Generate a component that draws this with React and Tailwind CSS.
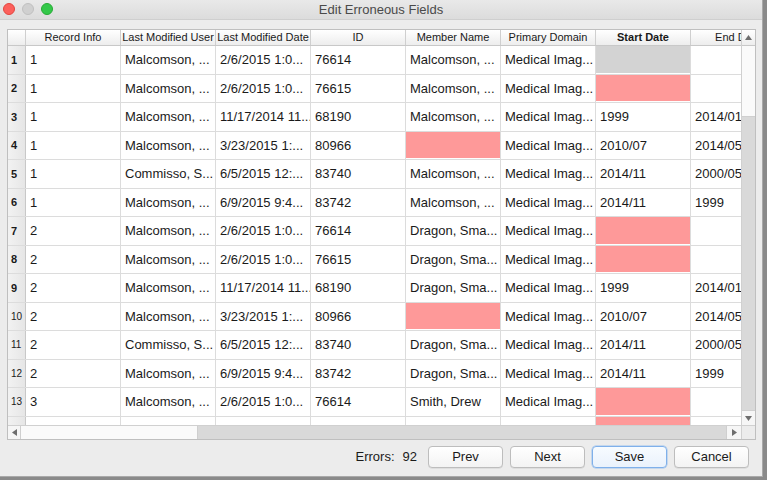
import React from "react";

const COLS = ["Record Info", "Last Modified User", "Last Modified Date", "ID", "Member Name", "Primary Domain", "Start Date", "End Date"];

const P = "pink";
const G = "gray";
const rows = [
  ["1", "Malcomson, ...", "2/6/2015 1:0...", "76614", "Malcomson, ...", "Medical Imag...", G, ""],
  ["1", "Malcomson, ...", "2/6/2015 1:0...", "76615", "Malcomson, ...", "Medical Imag...", P, ""],
  ["1", "Malcomson, ...", "11/17/2014 11...", "68190", "Malcomson, ...", "Medical Imag...", "1999", "2014/01"],
  ["1", "Malcomson, ...", "3/23/2015 1:...", "80966", P, "Medical Imag...", "2010/07", "2014/05"],
  ["1", "Commisso, S...", "6/5/2015 12:...", "83740", "Malcomson, ...", "Medical Imag...", "2014/11", "2000/05"],
  ["1", "Malcomson, ...", "6/9/2015 9:4...", "83742", "Malcomson, ...", "Medical Imag...", "2014/11", "1999"],
  ["2", "Malcomson, ...", "2/6/2015 1:0...", "76614", "Dragon, Sma...", "Medical Imag...", P, ""],
  ["2", "Malcomson, ...", "2/6/2015 1:0...", "76615", "Dragon, Sma...", "Medical Imag...", P, ""],
  ["2", "Malcomson, ...", "11/17/2014 11...", "68190", "Dragon, Sma...", "Medical Imag...", "1999", "2014/01"],
  ["2", "Malcomson, ...", "3/23/2015 1:...", "80966", P, "Medical Imag...", "2010/07", "2014/05"],
  ["2", "Commisso, S...", "6/5/2015 12:...", "83740", "Dragon, Sma...", "Medical Imag...", "2014/11", "2000/05"],
  ["2", "Malcomson, ...", "6/9/2015 9:4...", "83742", "Dragon, Sma...", "Medical Imag...", "2014/11", "1999"],
  ["3", "Malcomson, ...", "2/6/2015 1:0...", "76614", "Smith, Drew", "Medical Imag...", P, ""],
  ["", "", "", "", "", "", P, ""],
];

function Cell({ v }) {
  if (v === P || v === G) {
    return (
      <div className="w-[95px] shrink-0 h-full border-r border-[#dcdcdc] p-0 flex">
        <div className={(v === P ? "bg-[#fe9999]" : "bg-[#d3d3d3]") + " flex-1 mb-px"} />
      </div>
    );
  }
  return (
    <div className="w-[95px] shrink-0 h-full border-r border-[#dcdcdc] pl-[4px] flex items-center overflow-hidden whitespace-nowrap text-[13px] text-[#1a1a1a]">
      {v}
    </div>
  );
}

function Btn({ children, focus }) {
  return (
    <div
      className={
        "w-[75px] h-[22px] rounded-[4px] flex items-center justify-center text-[13px] text-[#1a1a1a] " +
        (focus
          ? "border border-[#7fb0ea] bg-gradient-to-b from-[#f7fbff] to-[#eaf2fc] shadow-[0_0_0_0.5px_#9cc2ee]"
          : "border border-[#bdbdbd] bg-gradient-to-b from-[#ffffff] to-[#f3f3f3] shadow-[0_0.5px_0.5px_rgba(0,0,0,0.12)]")
      }
    >
      {children}
    </div>
  );
}

export default function App() {
  return (
    <div className="w-[767px] h-[480px] bg-[#8a8a8a] overflow-hidden" style={{ fontFamily: '"Liberation Sans", Arial, sans-serif' }}>
      <div className="w-[763px] h-[477px] bg-[#ececec] flex flex-col border-r border-b border-[#a9a9a9]">
        {/* title bar */}
        <div className="h-[20px] shrink-0 relative flex items-center justify-center bg-gradient-to-b from-[#e9e9e9] to-[#dcdcdc] border-b border-[#cfcfcf]">
          <div className="absolute left-[3px] top-[3px] flex gap-[7px]">
            <div className="w-[12px] h-[12px] rounded-full bg-[#fc605c] border border-[#e2463f]" />
            <div className="w-[12px] h-[12px] rounded-full bg-[#d0d0d0] border border-[#c0c0c0]" />
            <div className="w-[12px] h-[12px] rounded-full bg-[#34c84a] border border-[#27aa35]" />
          </div>
          <span className="text-[13px] text-[#4a4a4a]">Edit Erroneous Fields</span>
        </div>

        {/* table */}
        <div className="ml-[7px] mt-[9px] w-[749px] h-[411px] border border-[#bfbfbf] bg-white flex flex-col">
          <div className="flex h-[395px]">
            <div className="w-[733px] h-full overflow-hidden flex flex-col">
              {/* header */}
              <div className="flex h-[16px] shrink-0 bg-gradient-to-b from-[#ffffff] to-[#ededed] border-b border-[#c8c8c8]">
                <div className="w-[18px] shrink-0 border-r border-[#cfcfcf]" />
                {COLS.map((c) => (
                  <div
                    key={c}
                    className={
                      "w-[95px] shrink-0 border-r border-[#cfcfcf] flex justify-center overflow-hidden whitespace-nowrap text-[11px] leading-[15px] text-[#1a1a1a] " +
                      (c === "Start Date" ? "font-bold" : "")
                    }
                  >
                    <span className="shrink-0">{c}</span>
                  </div>
                ))}
              </div>
              {rows.map((r, i) => (
                <div key={i} className="flex h-[28.5px] shrink-0 border-b border-[#dcdcdc]">
                  <div
                    className={
                      "w-[18px] shrink-0 h-full bg-gradient-to-r from-[#f2f2f2] to-[#e6e6e6] border-r border-[#c8c8c8] flex items-center pl-[3px] text-[#1a1a1a] " +
                      (i < 9 ? "text-[11px] font-bold" : "text-[10px]")
                    }
                  >
                    {i < 13 ? i + 1 : ""}
                  </div>
                  {r.map((v, j) => (
                    <Cell key={j} v={v} />
                  ))}
                </div>
              ))}
            </div>
            {/* vertical scrollbar */}
            <div className="w-[14px] h-full flex flex-col border-l border-[#d0d0d0]">
              <div className="h-[16px] shrink-0 bg-gradient-to-b from-[#ffffff] to-[#ededed] border-b border-[#c8c8c8] flex items-center justify-center">
                <svg width="7" height="5" viewBox="0 0 7 5"><path d="M3.5 0L7 5H0z" fill="#6e6e6e" /></svg>
              </div>
              <div className="h-[71px] shrink-0 bg-[#fafafa] border-b border-[#cfcfcf]" />
              <div className="flex-1 bg-[#d9d9d9]" />
              <div className="h-[15px] shrink-0 bg-[#f6f6f6] border-t border-[#cfcfcf] flex items-center justify-center">
                <svg width="7" height="5" viewBox="0 0 7 5"><path d="M0 0H7L3.5 5z" fill="#6e6e6e" /></svg>
              </div>
            </div>
          </div>
          {/* horizontal scrollbar */}
          <div className="flex h-[14px] border-t border-[#d0d0d0]">
            <div className="w-[13px] shrink-0 bg-[#f6f6f6] border-r border-[#cfcfcf] flex items-center justify-center">
              <svg width="5" height="7" viewBox="0 0 5 7"><path d="M0 3.5L5 0V7z" fill="#6e6e6e" /></svg>
            </div>
            <div className="w-[177px] shrink-0 bg-[#fafafa] border-r border-[#cfcfcf]" />
            <div className="flex-1 bg-[#d9d9d9]" />
            <div className="w-[15px] shrink-0 bg-[#f6f6f6] border-l border-[#cfcfcf] flex items-center justify-center">
              <svg width="5" height="7" viewBox="0 0 5 7"><path d="M5 3.5L0 0V7z" fill="#6e6e6e" /></svg>
            </div>
            <div className="w-[14px] shrink-0 bg-[#ececec] border-l border-[#d0d0d0]" />
          </div>
        </div>

        {/* footer */}
        <div className="flex items-center justify-end mt-[6px] pr-[13px] gap-[7px]">
          <div className="text-[13px] text-[#1a1a1a] mr-[4px] flex gap-[8px]">
            <span>Errors:</span>
            <span>92</span>
          </div>
          <Btn>Prev</Btn>
          <Btn>Next</Btn>
          <Btn focus>Save</Btn>
          <Btn>Cancel</Btn>
        </div>
      </div>
    </div>
  );
}
